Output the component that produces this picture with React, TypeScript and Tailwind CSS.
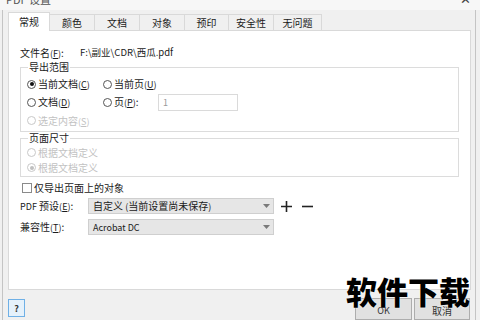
import React from "react";

const Radio = ({ checked = false, disabled = false }: { checked?: boolean; disabled?: boolean }) => (
  <span
    className={`inline-flex items-center justify-center w-[9px] h-[9px] rounded-full border bg-white shrink-0 ${
      disabled ? "border-[#c8c8c8]" : "border-[#555]"
    }`}
  >
    {checked && (
      <span className={`w-[4px] h-[4px] rounded-full ${disabled ? "bg-[#c0c0c0]" : "bg-[#111]"}`} />
    )}
  </span>
);

const U = ({ children }: { children: React.ReactNode }) => (
  <span className="text-[9px]">
    (<span className="underline underline-offset-1">{children}</span>)
  </span>
);

const Arrow = () => (
  <svg width="7" height="4" viewBox="0 0 7 4" className="shrink-0">
    <path d="M0 0 L7 0 L3.5 4 Z" fill="#7a7a7a" />
  </svg>
);

export default function App() {
  const tabs = [
    { t: "颜色", w: "w-[45px]" },
    { t: "文档", w: "w-[45px]" },
    { t: "对象", w: "w-[45px]" },
    { t: "预印", w: "w-[44px]" },
    { t: "安全性", w: "w-[45px]" },
    { t: "无问题", w: "w-[48px]" },
  ];
  return (
    <div className="w-[480px] h-[320px] overflow-hidden relative bg-[#f0f0f0] font-['Noto_Sans_CJK_SC','Noto_Sans',sans-serif] text-[10px] leading-none text-[#1a1a1a]">
      {/* title bar */}
      <div className="h-[10px] bg-[#f7f7f7] flex justify-between overflow-hidden">
        <span className="ml-[6px] -mt-[7px] text-[11px] leading-[12px] text-[#555]">PDF 设置</span>
        <span className="mr-[9px] -mt-[8px] text-[13px] leading-[14px] text-[#444]">✕</span>
      </div>

      {/* dialog body */}
      <div className="ml-[2px] w-[474px] h-[310px] border-l border-r border-[#c4c4c4] pl-[5px] pr-[4px] flex flex-col">
        {/* tabs */}
        <div className="mt-[2px] h-[18px] flex items-end">
          <div className="w-[42px] h-[19px] -mb-[1px] relative z-10 bg-white border-t border-l border-r border-[#d9d9d9] flex items-center justify-center pb-[1px]">
            常规
          </div>
          {tabs.map((tb) => (
            <div
              key={tb.t}
              className={`${tb.w} h-[16px] bg-[#f0f0f0] border-t border-r border-[#d9d9d9] flex items-center justify-center`}
            >
              {tb.t}
            </div>
          ))}
        </div>

        {/* panel */}
        <div className="h-[262px] bg-white border border-[#d9d9d9] px-[11px] flex flex-col">
          <div className="mt-[16px] h-[12px] flex items-center">
            <span className="w-[60px]">
              文件名<U>F</U>:
            </span>
            <span className="text-[9.5px]">F:\副业\CDR\西瓜.pdf</span>
          </div>

          <fieldset className="mt-[2px] border border-[#dcdcdc] pb-[1px]">
            <legend className="ml-[7px] px-[1px] leading-[12px]">导出范围</legend>
            <div className="mt-[2px] pl-[6px] flex flex-col">
              <div className="h-[18px] flex items-center">
                <div className="w-[76px] flex items-center gap-[2px]">
                  <Radio checked />
                  <span>
                    当前文档<U>C</U>
                  </span>
                </div>
                <div className="flex items-center gap-[2px]">
                  <Radio />
                  <span>
                    当前页<U>U</U>
                  </span>
                </div>
              </div>
              <div className="h-[18px] flex items-center">
                <div className="w-[76px] flex items-center gap-[2px]">
                  <Radio />
                  <span>
                    文档<U>D</U>
                  </span>
                </div>
                <div className="w-[55px] flex items-center gap-[2px]">
                  <Radio />
                  <span>
                    页<U>P</U>:
                  </span>
                </div>
                <div className="w-[80px] h-[17px] border border-[#dadada] bg-white flex items-center pl-[4px] text-[#9a9a9a] text-[9px]">
                  1
                </div>
              </div>
              <div className="h-[19px] flex items-center text-[#c2c2c2]">
                <div className="flex items-center gap-[2px]">
                  <Radio disabled />
                  <span>
                    选定内容<U>S</U>
                  </span>
                </div>
              </div>
            </div>
          </fieldset>

          <fieldset className="border border-[#dcdcdc] pb-[1px]">
            <legend className="ml-[7px] px-[1px] leading-[12px]">页面尺寸</legend>
            <div className="pl-[6px] flex flex-col text-[#c2c2c2] mt-[1px]">
              <div className="h-[15px] flex items-center gap-[2px]">
                <Radio disabled />
                <span>根据文档定义</span>
              </div>
              <div className="h-[15px] flex items-center gap-[2px]">
                <Radio checked disabled />
                <span>根据文档定义</span>
              </div>
            </div>
          </fieldset>

          <div className="mt-[5px] h-[12px] flex items-center">
            <span className="ml-[2px] w-[10px] h-[10px] border border-[#8a8a8a] bg-white shrink-0" />
            <span className="ml-[2px]">仅导出页面上的对象</span>
          </div>

          <div className="mt-[4px] h-[16px] flex items-center">
            <span className="w-[68px]">
              <span className="text-[9px]">PDF</span> 预设<U>E</U>:
            </span>
            <div className="w-[186px] h-[16px] bg-[#e6e6e6] border border-[#cfcfcf] flex items-center justify-between pl-[4px] pr-[3px]">
              <span>
                自定义 <span className="text-[9px]">(</span>当前设置尚未保存<span className="text-[9px]">)</span>
              </span>
              <Arrow />
            </div>
            <svg width="13" height="13" viewBox="0 0 13 13" className="ml-[6px]">
              <path d="M6.5 1 V12 M1 6.5 H12" stroke="#222" strokeWidth="1.6" />
            </svg>
            <svg width="13" height="13" viewBox="0 0 13 13" className="ml-[8px]">
              <path d="M1 6.5 H12" stroke="#222" strokeWidth="1.6" />
            </svg>
          </div>

          <div className="mt-[5px] h-[16px] flex items-center">
            <span className="w-[68px]">
              兼容性<U>T</U>:
            </span>
            <div className="w-[186px] h-[16px] bg-[#e6e6e6] border border-[#cfcfcf] flex items-center justify-between pl-[4px] pr-[3px]">
              <span className="text-[9px]">Acrobat DC</span>
              <Arrow />
            </div>
          </div>
        </div>

        {/* bottom buttons */}
        <div className="mt-[9px] flex items-start">
          <div className="w-[17px] h-[18px] border border-[#6fb0e6] bg-[#e5f1fb] flex items-center justify-center text-[9px] font-bold text-[#333]">
            ?
          </div>
          <div className="flex-1" />
          <div className="-mt-[1px] w-[57px] h-[22px] border border-[#adadad] bg-[#e1e1e1] flex items-center justify-center pt-[3px] text-[#333] text-[9px]">
            OK
          </div>
          <div className="-mt-[1px] ml-[2px] mr-[1px] w-[56px] h-[22px] border border-[#adadad] bg-[#e1e1e1] flex items-center justify-center pt-[3px] text-[#333]">
            取消
          </div>
        </div>
      </div>

      {/* watermark */}
      <div className="absolute left-[346px] top-[275px] text-[31px] leading-none font-black text-black [text-shadow:0_0_2px_#fff]">
        软件下载
      </div>
    </div>
  );
}
